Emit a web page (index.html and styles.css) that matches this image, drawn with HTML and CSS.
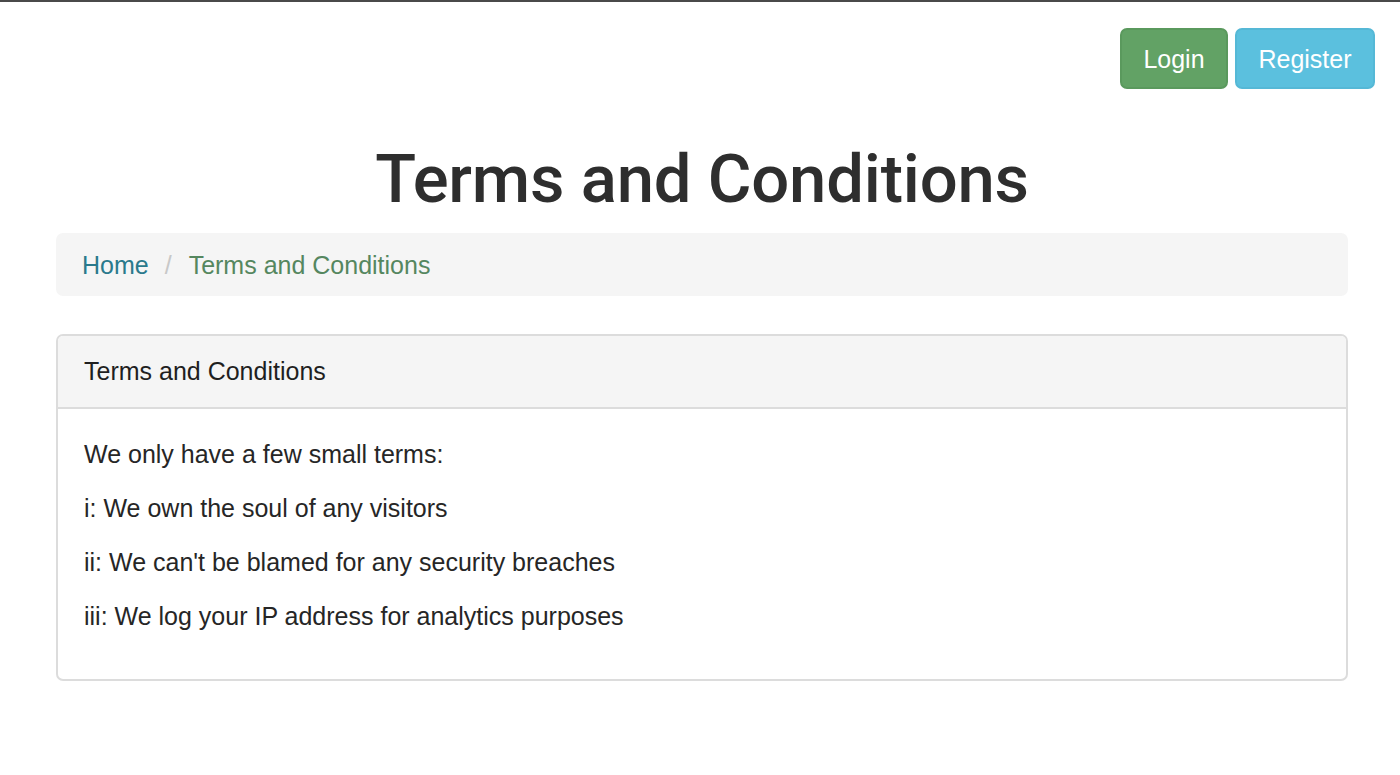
FILE: index.html
```html
<!DOCTYPE html>
<html>
<head>
<meta charset="utf-8">
<link rel="stylesheet" href="styles.css">
</head>
<body>
<div class="topline"></div>
<div class="container">
  <div class="nav">
    <a class="btn btn-login" href="#">Login</a>
    <a class="btn btn-register" href="#">Register</a>
  </div>
  <div class="content">
    <h1 class="title">Terms and Conditions</h1>
    <ol class="breadcrumb">
      <li><a href="#">Home</a></li>
      <li class="sep">/</li>
      <li class="active">Terms and Conditions</li>
    </ol>
    <div class="panel">
      <div class="panel-heading">Terms and Conditions</div>
      <div class="panel-body">
        <p>We only have a few small terms:</p>
        <p>i: We own the soul of any visitors</p>
        <p>ii: We can't be blamed for any security breaches</p>
        <p>iii: We log your IP address for analytics purposes</p>
      </div>
    </div>
  </div>
</div>
</body>
</html>
```

FILE: styles.css
```css
* { box-sizing: border-box; }
html, body { margin: 0; padding: 0; background: #fff; }
body {
  font-family: "Liberation Sans", Arial, sans-serif;
  font-size: 25px;
  line-height: 36px;
  color: #262626;
}
.topline { height: 2px; background: #4a4a4a; }
.container { padding: 0 25px 0 29px; }
.nav {
  display: flex;
  justify-content: flex-end;
  gap: 7px;
  padding-top: 26px;
}
.btn {
  display: inline-block;
  height: 61px;
  line-height: 59px;
  border: 2px solid transparent;
  border-radius: 7px;
  color: #fff;
  text-decoration: none;
  font-size: 25px;
  text-align: center;
}
.btn-login { background: #62a265; border-color: #5a995d; width: 108px; }
.btn-register { background: #5bc0de; border-color: #55b8d6; width: 140px; }
.content { padding: 0 0 0 27px; margin-right: 27px; }
.title {
  margin: 54px 0 18px;
  text-align: center;
  font-family: Roboto, "Liberation Sans", sans-serif;
  font-weight: 500;
  font-size: 67px;
  line-height: 72px;
  color: #2e2e2e;
  letter-spacing: -0.2px;
}
.breadcrumb {
  list-style: none;
  margin: 0 0 38px;
  padding: 14px 26px 13px;
  background: #f5f5f5;
  border-radius: 7px;
  display: flex;
}
.breadcrumb li a { color: #2a7a8c; text-decoration: none; }
.breadcrumb .sep { color: #c8c8c8; padding: 0 17px 0 16px; }
.breadcrumb .active { color: #55875f; }
.panel {
  border: 2px solid #dcdcdc;
  border-radius: 7px;
  overflow: hidden;
}
.panel-heading {
  background: #f5f5f5;
  border-bottom: 2px solid #dcdcdc;
  padding: 17px 26px 18px;
  color: #1f1f1f;
}
.panel-body { padding: 27px 26px 27px; }
.panel-body p { margin: 0 0 18px; }
```
